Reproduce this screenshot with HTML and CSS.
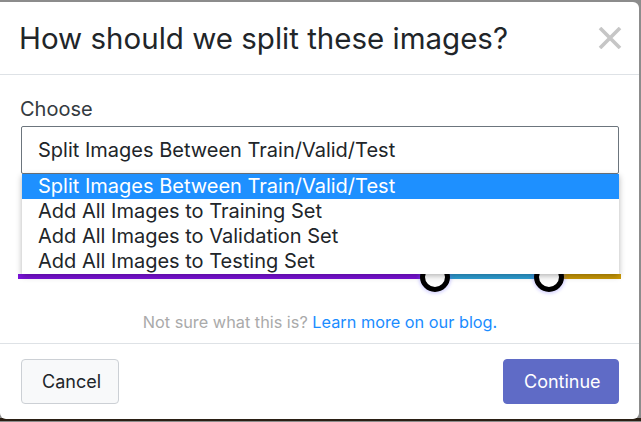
FILE: index.html
```html
<!DOCTYPE html>
<html lang="en">
    <head>
        <meta charset="UTF-8">
        <meta name="viewport" content="width=device-width, initial-scale=1.0">
        <title>Split Images</title>
        <link rel="stylesheet" href="styles.css">
    </head>
    <body>
        <div class="modal">
            <div class="modal-header">
                <h2>How should we split these images?</h2>
                <svg class="close" width="24" height="22" viewBox="0 0 24 22">
                    <path d="M2 1 L22 21 M22 1 L2 21" stroke="#c6c6c6" stroke-width="3.6" fill="none"/>
                </svg>
            </div>
            <div class="modal-body">
                <label class="field-label">Choose</label>
                <div class="select-wrap">
                    <div class="select-box">Split Images Between Train/Valid/Test</div>
                    <ul class="options">
                        <li class="selected">Split Images Between Train/Valid/Test</li>
                        <li>Add All Images to Training Set</li>
                        <li>Add All Images to Validation Set</li>
                        <li>Add All Images to Testing Set</li>
                    </ul>
                </div>
                <div class="split-bar">
                    <div class="seg seg-train"></div>
                    <div class="seg seg-valid"></div>
                    <div class="seg seg-test"></div>
                    <span class="handle handle-one"></span>
                    <span class="handle handle-two"></span>
                </div>
                <p class="help">Not sure what this is? <a href="#">Learn more on our blog.</a></p>
            </div>
            <div class="modal-footer">
                <button class="btn btn-cancel">Cancel</button>
                <button class="btn btn-continue">Continue</button>
            </div>
        </div>
        <div class="backdrop-strip"></div>
    </body>
</html>
```

FILE: styles.css
```css
body {
    margin: 0;
    background-color: #8c8c8c;
    font-family: Inter, "Noto Sans", sans-serif;
    width: 641px;
    height: 422px;
    overflow: hidden;
}
.modal {
    width: 639px;
    height: 417px;
    margin-top: 2px;
    background-color: white;
    border-radius: 0 6px 6px 6px;
    display: flex;
    flex-direction: column;
    position: relative;
    z-index: 1;
}
.backdrop-strip {
    height: 3px;
    background-color: #2a1f14;
    margin-top: -1px;
}
.modal-header {
    height: 72px;
    border-bottom: 1px solid #dee2e6;
    display: flex;
    align-items: center;
    justify-content: space-between;
    padding: 0 17px 0 19px;
}
.modal-header h2 {
    margin: 0;
    font-size: 29.5px;
    font-weight: 400;
    color: #212529;
}
.close {
    margin-top: -1px;
}
.modal-body {
    flex: 1;
    padding: 22px 20px 0 21px;
}
.field-label {
    display: block;
    font-size: 20px;
    color: #343a40;
    margin-bottom: 5px;
    margin-left: -1px;
}
.select-wrap {
    position: relative;
    z-index: 2;
}
.select-box {
    height: 46px;
    border: 1px solid #6c757d;
    border-radius: 2px;
    padding-left: 16px;
    font-size: 20px;
    line-height: 46px;
    color: #212529;
}
.options {
    position: absolute;
    top: 48px;
    left: 1px;
    width: 597px;
    margin: 0;
    padding: 0;
    list-style: none;
    background-color: white;
    box-shadow: 0 2px 6px rgba(0, 0, 0, 0.3);
}
.options li {
    height: 25px;
    line-height: 25px;
    padding-left: 16px;
    font-size: 20px;
    color: #212529;
}
.options li.selected {
    background-color: #1e90ff;
    color: white;
}
.split-bar {
    display: flex;
    position: relative;
    height: 5px;
    margin: 100px -2px 0 -3px;
}
.seg {
    height: 100%;
}
.seg-train {
    width: 417px;
    background-color: #7b12d9;
}
.seg-valid {
    width: 114px;
    background-color: #2ea0d6;
}
.seg-test {
    flex: 1;
    background-color: #cc9a06;
}
.handle {
    position: absolute;
    top: -12px;
    width: 20px;
    height: 20px;
    border: 5px solid black;
    border-radius: 50%;
    background-color: white;
    box-shadow: 0 0 3px 2px rgba(120, 110, 255, 0.25);
}
.handle-one {
    left: 402px;
}
.handle-two {
    left: 516px;
}
.help {
    margin: 33px 0 0;
    text-align: center;
    font-size: 16.3px;
    color: #aaaaaa;
}
.help a {
    color: #1a8cff;
    text-decoration: none;
}
.modal-footer {
    height: 75px;
    border-top: 1px solid #dee2e6;
    display: flex;
    align-items: center;
    justify-content: space-between;
    padding: 0 20px 0 21px;
}
.btn {
    height: 45px;
    font-family: Inter, "Noto Sans", sans-serif;
    font-size: 18px;
    border-radius: 4px;
    padding: 0 20px;
    cursor: pointer;
}
.btn-cancel {
    width: 98px;
    background-color: #f8f9fa;
    border: 1px solid #ccd0d5;
    color: #212529;
}
.btn-continue {
    width: 116px;
    background-color: #5f6bc6;
    border: 1px solid #5f6bc6;
    color: white;
}
```
